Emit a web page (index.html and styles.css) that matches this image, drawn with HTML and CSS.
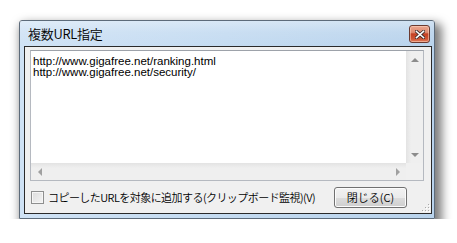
FILE: index.html
```html
<!DOCTYPE html>
<html lang="ja">
<head>
<meta charset="utf-8">
<title>複数URL指定</title>
<link rel="stylesheet" href="styles.css">
</head>
<body>
<div class="window">
  <div class="titlebar">
    <span class="title">複数URL指定</span>
    <div class="close">
      <svg width="10" height="9" viewBox="0 0 10 9"><path d="M1.5 1.5 L8.5 7.5 M8.5 1.5 L1.5 7.5" stroke="#3a2a2a" stroke-width="3.2" stroke-linecap="square"/><path d="M1.5 1.5 L8.5 7.5 M8.5 1.5 L1.5 7.5" stroke="#ffffff" stroke-width="1.6" stroke-linecap="square"/></svg>
    </div>
  </div>
  <div class="client">
    <div class="edit">
      <div class="edit-main">
        <div class="text">http://www.gigafree.net/ranking.html<br>http://www.gigafree.net/security/</div>
        <div class="vscroll">
          <div class="sbtn"><span class="arr up"></span></div>
          <div class="sbtn"><span class="arr down"></span></div>
        </div>
      </div>
      <div class="edit-bottom">
        <div class="hscroll">
          <div class="sbtn"><span class="arr left"></span></div>
          <div class="sbtn"><span class="arr right"></span></div>
        </div>
        <div class="corner"></div>
      </div>
    </div>
    <div class="bottom">
      <label class="check"><span class="box"></span><span class="label">コピーしたURLを対象に追加する(クリップボード監視)(V)</span></label>
      <button class="btn">閉じる(C)</button>
    </div>
    <div class="grip">
      <svg width="9" height="9" viewBox="0 0 9 9">
        <g fill="#a9a9a9">
          <rect x="7" y="1" width="1" height="1"/>
          <rect x="4" y="4" width="1" height="1"/><rect x="7" y="4" width="1" height="1"/>
          <rect x="1" y="7" width="1" height="1"/><rect x="4" y="7" width="1" height="1"/><rect x="7" y="7" width="1" height="1"/>
        </g>
        <g fill="#ffffff">
          <rect x="8" y="2" width="1" height="1"/>
          <rect x="5" y="5" width="1" height="1"/><rect x="8" y="5" width="1" height="1"/>
          <rect x="2" y="8" width="1" height="1"/><rect x="5" y="8" width="1" height="1"/><rect x="8" y="8" width="1" height="1"/>
        </g>
      </svg>
    </div>
  </div>
</div>
</body>
</html>
```
FILE: styles.css
```css
html, body {
  margin: 0;
  padding: 0;
  background: #ffffff;
}
body {
  padding: 20px 0 0 19px;
  font-family: "Noto Sans CJK JP", "Liberation Sans", sans-serif;
}
.window {
  box-sizing: border-box;
  width: 416px;
  height: 199px;
  border: 1px solid #5d6b7a;
  border-radius: 3px 3px 0 0;
  background: linear-gradient(90deg, #cfe2f5 0%, #c4dbf1 50%, #b9d3ec 100%);
  box-shadow: 4px 6px 10px 3px rgba(0, 0, 0, 0.5);
  display: flex;
  flex-direction: column;
  padding: 0 2px 4px 4px;
}
.titlebar {
  height: 25px;
  display: flex;
  align-items: flex-start;
  justify-content: space-between;
  background: linear-gradient(180deg, rgba(255,255,255,0.35) 0%, rgba(255,255,255,0.1) 45%, rgba(255,255,255,0) 100%);
  margin: 0 -2px 0 -4px;
  padding: 0 4px 0 8px;
}
.title {
  font-size: 13px;
  line-height: 13px;
  margin-top: 6px;
  color: #000;
  letter-spacing: -0.3px;
  font-weight: 350;
}
.close {
  box-sizing: border-box;
  width: 21px;
  height: 18px;
  margin-top: 4px;
  border: 1px solid #6b3a30;
  border-radius: 3px;
  background: linear-gradient(180deg, #eba690 0%, #de8a70 40%, #c43f22 50%, #cf5535 80%, #e2805f 100%);
  box-shadow: inset 0 0 0 1px rgba(255,220,200,0.5);
  display: flex;
  align-items: center;
  justify-content: center;
}
.client {
  flex: 1;
  border: 1px solid #2a2a2a;
  background: #f0f0f0;
  display: flex;
  flex-direction: column;
  padding: 3px 7px 0 5px;
  position: relative;
}
.edit {
  height: 131px;
  box-sizing: border-box;
  border: 1px solid #b5b9c0;
  border-top-color: #9da2aa;
  background: #ffffff;
  display: flex;
  flex-direction: column;
}
.edit-main {
  flex: 1;
  display: flex;
  min-height: 0;
}
.text {
  flex: 1;
  padding: 5px 0 0 2px;
  font-family: "Liberation Sans", "Noto Sans CJK JP", sans-serif;
  font-size: 11.5px;
  line-height: 11px;
  color: #000;
  white-space: nowrap;
  overflow: hidden;
}
.vscroll {
  width: 17px;
  background: linear-gradient(90deg, #e3e3e3 0%, #efefef 30%, #efefef 100%);
  display: flex;
  flex-direction: column;
  justify-content: space-between;
}
.vscroll .sbtn {
  height: 17px;
  display: flex;
  align-items: center;
  justify-content: center;
}
.edit-bottom {
  height: 17px;
  display: flex;
}
.hscroll {
  flex: 1;
  background: linear-gradient(180deg, #e3e3e3 0%, #efefef 30%, #efefef 100%);
  display: flex;
  justify-content: space-between;
}
.hscroll .sbtn {
  width: 17px;
  display: flex;
  align-items: center;
  justify-content: center;
}
.corner {
  width: 17px;
  background: #f0f0f0;
}
.arr {
  width: 0;
  height: 0;
  display: block;
}
.arr.up {
  border-left: 4px solid transparent;
  border-right: 4px solid transparent;
  border-bottom: 4px solid #8c8c8c;
}
.arr.down {
  border-left: 4px solid transparent;
  border-right: 4px solid transparent;
  border-top: 4px solid #8c8c8c;
}
.arr.left {
  border-top: 4px solid transparent;
  border-bottom: 4px solid transparent;
  border-right: 4px solid #a0a0a0;
}
.arr.right {
  border-top: 4px solid transparent;
  border-bottom: 4px solid transparent;
  border-left: 4px solid #a0a0a0;
}
.bottom {
  display: flex;
  align-items: center;
  justify-content: space-between;
  margin-top: 6px;
  height: 21px;
  padding: 0 17px 0 1px;
}
.check {
  display: flex;
  align-items: center;
}
.box {
  box-sizing: border-box;
  width: 13px;
  height: 13px;
  border: 1px solid #8e8f8f;
  background: linear-gradient(135deg, #dcdcdc 0%, #f4f4f4 100%);
  box-shadow: inset 0 0 0 1px #f6f6f6;
  margin-right: 4px;
}
.label {
  font-size: 11px;
  line-height: 13px;
  color: #000;
  letter-spacing: -0.55px;
  font-weight: 350;
}
.btn {
  box-sizing: border-box;
  width: 73px;
  height: 21px;
  border: 1px solid #707070;
  border-radius: 3px;
  background: linear-gradient(180deg, #f2f2f2 0%, #ebebeb 50%, #dddddd 51%, #cfcfcf 100%);
  box-shadow: inset 0 0 0 1px #fcfcfc;
  font-family: "Noto Sans CJK JP", sans-serif;
  font-size: 11px;
  line-height: 13px;
  font-weight: 350;
  color: #000;
  padding: 0;
}
.grip {
  position: absolute;
  right: 1px;
  bottom: 1px;
  width: 9px;
  height: 9px;
  line-height: 0;
}
```
